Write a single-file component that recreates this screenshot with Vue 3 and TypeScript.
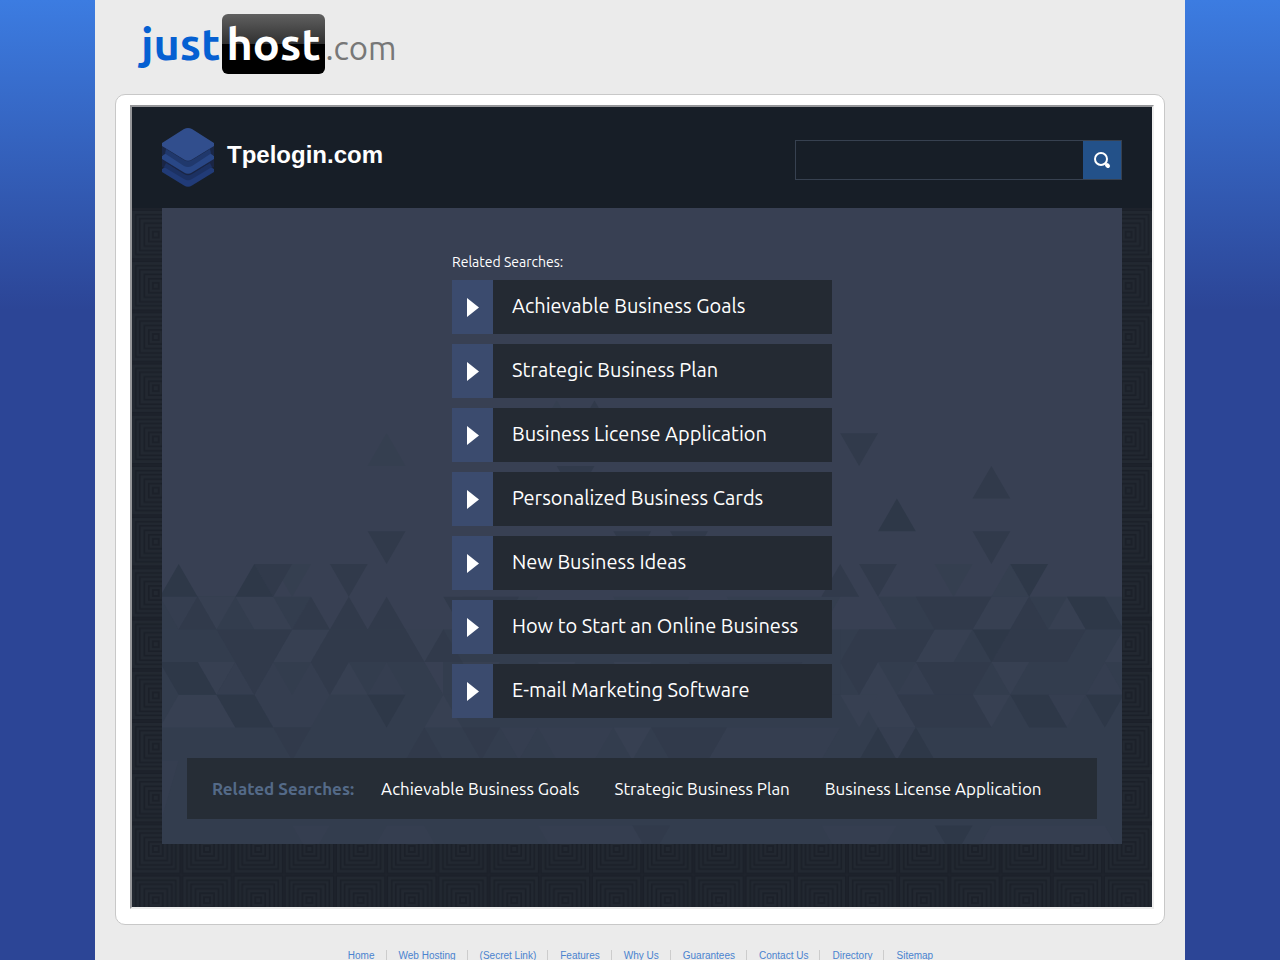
<script setup lang="ts">
const searches: string[] = [
  'Achievable Business Goals',
  'Strategic Business Plan',
  'Business License Application',
  'Personalized Business Cards',
  'New Business Ideas',
  'How to Start an Online Business',
  'E-mail Marketing Software',
]
const bottomSearches = searches.slice(0, 3)
const footerLinks: string[] = [
  'Home', 'Web Hosting', '(Secret Link)', 'Features', 'Why Us',
  'Guarantees', 'Contact Us', 'Directory', 'Sitemap',
]

interface FacetGroup {
  shade: 'faint' | 'mid' | 'soft' | 'dark' | 'deep' | 'light'
  shapes: string[]
}

// Facets of the panel backdrop, in units of half a triangle base by one row.
const facets: FacetGroup[] = [
  {
    shade: 'mid',
    shapes: [
      '0,2 13,2 15,4 52,4 52,9 0,9', '36,2 52,2 52,4 34,4', '0,1 8,1 7,2 0,2',
      '38,1 52,1 52,2 39,2', '15,2 36,2 36,4 15,4',
    ],
  },
  {
    shade: 'faint',
    shapes: [
      '12,-4 11,-3 13,-3', '42,0 41,0 42,1 43,0', '45,0 44,1 46,1', '6,0 8,0 7,1',
      '21,-5 22,-4 20,-4', '16,1 20,1 19,2 17,2', '24,1 28,1 27,2 25,2',
      '30,1 36,1 35,2 31,2',
    ],
  },
  {
    shade: 'light',
    shapes: [
      '2,1 4,1 3,2', '4,1 6,1 7,2 5,2', '7,2 9,2 8,3 6,3', '13,2 15,2 14,3',
      '41,2 43,2 42,3 40,3', '44,1 46,1 45,2 43,2', '48,1 47,2 49,2',
      '51,2 50,3 52,3', '44,3 46,3 45,4', '2,3 4,3 3,4', '10,3 9,4 11,4',
      '1,4 3,4 4,5 0,5', '15,4 14,5 16,5', '38,3 37,4 38,5 40,5 39,4',
      '43,4 45,4 44,5', '16,3 18,3 17,4', '20,3 22,3 21,4', '36,4 38,4 37,5',
      '24,5 26,5 25,6', '24,3 26,3 25,4',
    ],
  },
  {
    shade: 'soft',
    shapes: [
      '0,1 2,1 1,2', '4,3 3,4 5,4', '12,3 11,4 13,4',
      '5,4 6,3 7,4 8,3 9,4 8,5 6,5', '40,3 39,4 41,4', '50,3 49,4 51,4',
      '47,4 49,4 48,5', '18,5 20,5 19,6', '30,5 36,5 35,6 29,6',
      '20,5 24,5 23,6 21,6', '38,5 40,5 39,6', '7,8 9,8 8,9', '12,8 14,8 15,9 11,9',
      '20,8 26,8 25,9 21,9', '35,8 39,8 38,9 36,9', '44,8 50,8 51,9 43,9',
      '0,6 1,6 0,8',
    ],
  },
  {
    shade: 'dark',
    shapes: [
      '12,-1 11,-1 12,0 13,-1', '37,-4 36,-4 37,-3 38,-4', '44,-3 43,-2 45,-2',
      '44,-1 43,-1 44,0 45,-1', '6,0 5,0 6,1 7,0', '10,0 9,0 10,1 11,0',
      '38,0 37,0 38,1 39,0', '2,1 1,2 3,2', '8,1 7,2 9,2', '10,1 9,2 11,2',
      '12,1 11,2 13,2', '3,2 7,2 6,3 4,3', '9,2 13,2 14,3 8,3', '15,2 14,3 16,3',
      '40,1 44,1 43,2 41,2', '46,1 45,2 47,2', '37,2 41,2 40,3 36,3',
      '45,2 49,2 48,3 44,3', '40,3 44,3 43,4 41,4', '4,3 6,3 5,4', '8,3 10,3 9,4',
      '36,3 38,3 37,4', '6,5 8,5 7,6', '14,5 13,6 15,6', '16,5 18,5 17,6',
      '26,5 30,5 29,6 27,6', '39,4 43,4 44,5 40,5', '28,3 34,3 33,4 29,4',
      '23,-5 22,-4 24,-4', '22,-3 21,-3 22,-2 23,-3', '26,-1 24,-1 25,0',
      '29,-1 27,-1 28,0', '36,0 35,1 37,1', '15,1 19,1 18,2 16,2', '25,8 27,8 26,9',
    ],
  },
  {
    shade: 'deep',
    shapes: [
      '1,0 0,1 2,1', '5,0 4,1 6,1', '46,0 45,0 46,1 47,0', '39,-2 38,-1 40,-1',
      '48,1 50,1 51,2 49,2', '0,3 2,3 3,4 1,4', '3,4 5,4 6,5 4,5',
      '11,4 13,4 12,5', '45,4 47,4 48,5 46,5', '49,4 51,4 50,5',
      '38,5 37,6 39,6', '40,5 39,6 41,6', '43,2 45,2 44,3', '41,8 43,8 42,9',
    ],
  },
]

const toPoints = (shape: string): string =>
  shape
    .split(' ')
    .map((pair) => {
      const [u, v] = pair.split(',').map(Number)
      return `${(u * 18.9 - 2.2).toFixed(1)},${(v * 32.7 + 356).toFixed(1)}`
    })
    .join(' ')

const rings: number[] = [3, 7, 11.5, 16, 20, 24.5]
</script>

<template>
  <div class="page">
    <div class="sheet">
      <header class="brand">
        <a class="logo" href="#" aria-label="justhost.com">
          <span class="just">just</span><span class="host">host</span><span class="com">.com</span>
        </a>
      </header>

      <div class="card">
        <div class="frame">
          <svg class="weave" aria-hidden="true">
            <defs>
              <pattern id="rings" x="-1.8" y="-0.4" width="51.2" height="51.2" patternUnits="userSpaceOnUse">
                <rect width="51.2" height="51.2" fill="#222831" />
                <rect
                  v-for="r in rings"
                  :key="r"
                  :x="25.6 - r"
                  :y="25.6 - r"
                  :width="r * 2"
                  :height="r * 2"
                  fill="none"
                  stroke="#1b2029"
                  stroke-width="1.8"
                />
              </pattern>
            </defs>
            <rect width="100%" height="100%" fill="url(#rings)" />
          </svg>

          <div class="topbar">
            <div class="domain">
              <svg class="layers" viewBox="0 0 52 60" aria-hidden="true">
                <path d="M0 30H52V39L30 54Q26 57 22 54L0 39Z" fill="#1a2544" />
                <path d="M7 37L0 41V44L22 57.500Q26 60 30 57.500L52 44V41L45 37L30 47Q26 49 22 47Z" fill="#213b77" />
                <path d="M4 35L22 46Q26 48.500 30 46L48 35L50 39L30 51Q26 53.500 22 51L2 39Z" fill="#1c3162" />
                <path d="M0 17H52V27L30 41Q26 43 22 41L0 27Z" fill="#1a2747" />
                <path d="M6 24L0 28V31L22 44.500Q26 47 30 44.500L52 31V28L46 24L30 34Q26 36 22 34Z" fill="#294786" />
                <path d="M4 21L22 32Q26 34.500 30 32L48 21L49 25.500L30 38Q26 40 22 38L3 25.500Z" fill="#20386c" />
                <path d="M0 15V18L22 31.500Q26 34 30 31.500L52 18V15L30 1Q26 -1 22 1Z" fill="#314e8d" />
              </svg>
              <h1>Tpelogin.com</h1>
            </div>
            <form class="search" @submit.prevent>
              <input type="text" aria-label="Search" />
              <button type="submit" aria-label="Search">
                <svg viewBox="0 0 18 18" aria-hidden="true">
                  <circle cx="8" cy="8" r="6" fill="none" stroke="#fff" stroke-width="2" />
                  <path d="M14 14L15 15" stroke="#fff" stroke-width="4" stroke-linecap="round" />
                </svg>
              </button>
            </form>
          </div>

          <main class="panel">
            <svg class="facets" viewBox="0 0 960 636" preserveAspectRatio="xMidYMax slice" aria-hidden="true">
              <g v-for="group in facets" :key="group.shade" :class="group.shade">
                <polygon v-for="shape in group.shapes" :key="shape" :points="toPoints(shape)" />
              </g>
            </svg>
            <section class="related">
              <h2>Related Searches:</h2>
              <ul>
                <li v-for="item in searches" :key="item">
                  <a href="#">
                    <span class="arrow">
                      <svg viewBox="0 0 12 20" aria-hidden="true"><path d="M0 1L12 10.500L0 20Z" fill="#fff" /></svg>
                    </span>
                    <span class="label">{{ item }}</span>
                  </a>
                </li>
              </ul>
            </section>
            <nav class="strip">
              <strong>Related Searches:</strong>
              <a v-for="item in bottomSearches" :key="item" href="#">{{ item }}</a>
            </nav>
          </main>
        </div>
      </div>

      <footer class="footer">
        <a v-for="link in footerLinks" :key="link" href="#">{{ link }}</a>
      </footer>
    </div>
  </div>
</template>

<style>
html {
  background: #2c4596;
}
body {
  margin: 0;
  overflow: hidden;
}
</style>

<style scoped>
.page {
  min-height: 100vh;
  background: linear-gradient(#3c7ce1 0, #2c4596 310px);
  font-family: "Liberation Sans", Arial, sans-serif;
}
.sheet {
  box-sizing: border-box;
  max-width: 1090px;
  min-height: 100vh;
  margin: 0 auto;
  padding: 0 20px;
  background: #ebebeb;
}
.brand {
  box-sizing: border-box;
  height: 94px;
  padding: 14px 0 0 26px;
}
.logo {
  display: inline-flex;
  align-items: baseline;
  font-family: Ubuntu, "Open Sans", sans-serif;
  line-height: 60px;
  text-decoration: none;
}
.just,
.host {
  font-size: 45px;
  font-weight: 700;
}
.just {
  color: #0560d2;
}
.host {
  margin-left: 2px;
  padding: 0 4px;
  border-radius: 6px;
  color: #fff;
  background: linear-gradient(#606060 0, #303030 50%, #000 50%);
}
.com {
  margin-left: 1px;
  color: #777;
  font-size: 33px;
}
.card {
  padding: 10px 10px 15px 14px;
  border: 1px solid #c8c8c8;
  border-radius: 10px;
  background: #fff;
}
.frame {
  position: relative;
  padding-bottom: 63px;
  border: 2px solid;
  border-color: #959699 #eee #eee #959699;
  background: #20262f;
}
.weave,
.facets {
  position: absolute;
  inset: 0;
  width: 100%;
  height: 100%;
}
.topbar {
  position: relative;
  display: flex;
  box-sizing: border-box;
  justify-content: space-between;
  height: 101px;
  padding: 21px 30px 0;
  background: #171e27;
}
.domain {
  display: flex;
  gap: 13px;
}
.layers {
  width: 52px;
  height: 60px;
}
.domain h1 {
  margin: 0;
  color: #fff;
  font-size: 24px;
  line-height: 54px;
}
.search {
  display: flex;
  box-sizing: border-box;
  width: 327px;
  height: 40px;
  margin-top: 12px;
  border: 1px solid #374150;
}
.search input {
  flex: 1;
  min-width: 0;
  padding: 0 10px;
  border: 0;
  outline: 0;
  color: #fff;
  background: transparent;
  font-size: 16px;
}
.search button {
  display: flex;
  align-items: center;
  justify-content: center;
  width: 38px;
  padding: 0;
  border: 0;
  background: #235189;
}
.search svg {
  width: 18px;
  height: 18px;
}
.panel {
  position: relative;
  margin: 0 30px;
  padding: 44px 25px 25px;
  background: #384053;
  font-family: Ubuntu, "Noto Sans", "Open Sans", sans-serif;
}
.faint { fill: #353f50; }
.mid { fill: #333d4e; }
.soft { fill: #353e50; }
.light { fill: #374052; }
.dark { fill: #313a4b; }
.deep { fill: #2e3848; }
.related {
  position: relative;
  max-width: 380px;
  margin: 0 auto;
}
.related h2 {
  margin: 0 0 8px;
  color: #fff;
  font-size: 14px;
  font-weight: 400;
  line-height: 20px;
}
.related ul {
  display: flex;
  flex-direction: column;
  gap: 10px;
  margin: 0;
  padding: 0;
  list-style: none;
}
.related a {
  display: flex;
  height: 54px;
  color: #fff;
  background: #242a33;
  font-size: 20px;
  line-height: 52px;
  text-decoration: none;
}
.arrow {
  display: flex;
  align-items: center;
  justify-content: center;
  width: 41px;
  background: #3b4b6e;
}
.arrow svg {
  width: 12px;
  height: 20px;
}
.label {
  padding-left: 19px;
}
.strip {
  position: relative;
  display: flex;
  gap: 35px;
  margin-top: 40px;
  padding: 0 25px;
  background: #262d36;
  font-size: 17px;
  line-height: 61px;
  white-space: nowrap;
}
.strip strong {
  margin-right: -8px;
  color: #546a88;
}
.strip a {
  color: #fff;
  text-decoration: none;
}
.footer {
  display: flex;
  justify-content: center;
  margin-top: 25px;
  font-size: 10px;
  line-height: 12px;
}
.footer a {
  padding: 0 11px 0 12px;
  border-right: 1px solid #ccc;
  color: #4a83cf;
  text-decoration: none;
}
.footer a:last-child {
  border-right: 0;
}
</style>
